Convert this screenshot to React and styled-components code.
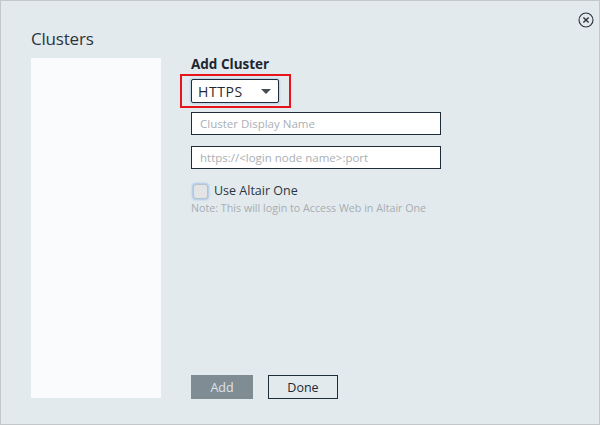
import React, { useState } from "react";
import styled, { createGlobalStyle } from "styled-components";

const GlobalStyle = createGlobalStyle`
  html, body {
    margin: 0;
    padding: 0;
    background: #e3eaed;
  }
  * {
    box-sizing: border-box;
  }
`;

const Dialog = styled.div`
  position: relative;
  width: 600px;
  height: 425px;
  border: 1px solid #c4c7c9;
  background: #e3eaed;
  padding: 26px 30px 26px 30px;
  display: flex;
  flex-direction: column;
  font-family: "Open Sans", "Noto Sans", sans-serif;
  color: #222d38;
`;

const CloseButton = styled.button`
  position: absolute;
  top: 10px;
  right: 4px;
  width: 18px;
  height: 18px;
  padding: 0;
  border: none;
  background: transparent;
  cursor: pointer;
  display: flex;
  align-items: center;
  justify-content: center;
`;

const Title = styled.h1`
  margin: 0;
  font-size: 17px;
  font-weight: 400;
  line-height: 24px;
  color: #2b3540;
  letter-spacing: -0.2px;
`;

const Body = styled.div`
  flex: 1;
  display: flex;
  gap: 30px;
  margin-top: 7px;
`;

const ClusterList = styled.div`
  width: 130px;
  background: #f9fbfd;
`;

const Form = styled.div`
  flex: 1;
  display: flex;
  flex-direction: column;
`;

const Heading = styled.h2`
  margin: -3px 0 0;
  font-size: 13.5px;
  font-weight: 700;
  line-height: 18px;
  color: #1c2631;
`;

const Highlight = styled.div`
  width: 111px;
  margin: 1px 0 0 -11px;
  padding: 3px 9px;
  border: 2px solid #e8141c;
`;

const Select = styled.div`
  width: 88px;
  height: 24px;
  background: #fff;
  border: 1px solid #1f2d3a;
  border-radius: 2px;
  box-shadow: 0 0 2px 1px #b9d0ea;
  display: flex;
  align-items: center;
  justify-content: space-between;
  padding: 0 7px 0 6px;
  font-size: 14px;
  letter-spacing: 0.6px;
  color: #1f2933;
`;

const Caret = styled.span`
  width: 0;
  height: 0;
  border-left: 5px solid transparent;
  border-right: 5px solid transparent;
  border-top: 5px solid #444c54;
`;

const TextInput = styled.input`
  width: 250px;
  height: 23px;
  margin-top: ${(p) => p.$gap}px;
  padding: 0 8px;
  border: 1px solid #1f2d3a;
  background: #fff;
  font-family: "Open Sans", "Noto Sans", sans-serif;
  font-size: 11.5px;
  color: #1f2933;
  outline: none;
  &::placeholder {
    color: #a9b0b5;
  }
`;

const CheckRow = styled.label`
  display: flex;
  align-items: center;
  gap: 6px;
  margin: 13px 0 0 2px;
  font-size: 12.5px;
  line-height: 18px;
  color: #2b3540;
  cursor: pointer;
`;

const Box = styled.span`
  width: 15px;
  height: 15px;
  border-radius: 3px;
  background: ${(p) => (p.$checked ? "#4a8fd6" : "#e2e4e6")};
  border: 1px solid #b8c3ce;
  box-shadow: 0 0 2px 1px #a9c6e8;
`;

const Note = styled.div`
  margin-top: 1px;
  font-size: 10.7px;
  color: #a6adb2;
`;

const Actions = styled.div`
  margin-top: auto;
  display: flex;
  gap: 15px;
  margin-bottom: -1px;
`;

const Button = styled.button`
  width: ${(p) => p.$width}px;
  height: 24px;
  font-family: "Open Sans", "Noto Sans", sans-serif;
  font-size: 12.5px;
  padding: 0;
  cursor: pointer;
  background: ${(p) => (p.$primary ? "#7f8c94" : "transparent")};
  color: ${(p) => (p.$primary ? "#dfe4e7" : "#1f2933")};
  border: ${(p) => (p.$primary ? "none" : "1px solid #1f2d3a")};
`;

export default function App() {
  const [useOne, setUseOne] = useState(false);

  return (
    <>
      <GlobalStyle />
      <Dialog>
        <CloseButton aria-label="Close">
          <svg width="16" height="16" viewBox="0 0 16 16">
            <circle cx="8" cy="8" r="7" fill="none" stroke="#2b3137" strokeWidth="1.1" />
            <path d="M5.4 5.4 L10.6 10.6 M10.6 5.4 L5.4 10.6" stroke="#2b3137" strokeWidth="1.4" />
          </svg>
        </CloseButton>
        <Title>Clusters</Title>
        <Body>
          <ClusterList />
          <Form>
            <Heading>Add Cluster</Heading>
            <Highlight>
              <Select>
                <span>HTTPS</span>
                <Caret />
              </Select>
            </Highlight>
            <TextInput $gap={4} placeholder="Cluster Display Name" />
            <TextInput $gap={11} placeholder="https://<login node name>:port" />
            <CheckRow onClick={() => setUseOne(!useOne)}>
              <Box $checked={useOne} />
              Use Altair One
            </CheckRow>
            <Note>Note: This will login to Access Web in Altair One</Note>
            <Actions>
              <Button $primary $width={62}>Add</Button>
              <Button $width={70}>Done</Button>
            </Actions>
          </Form>
        </Body>
      </Dialog>
    </>
  );
}
